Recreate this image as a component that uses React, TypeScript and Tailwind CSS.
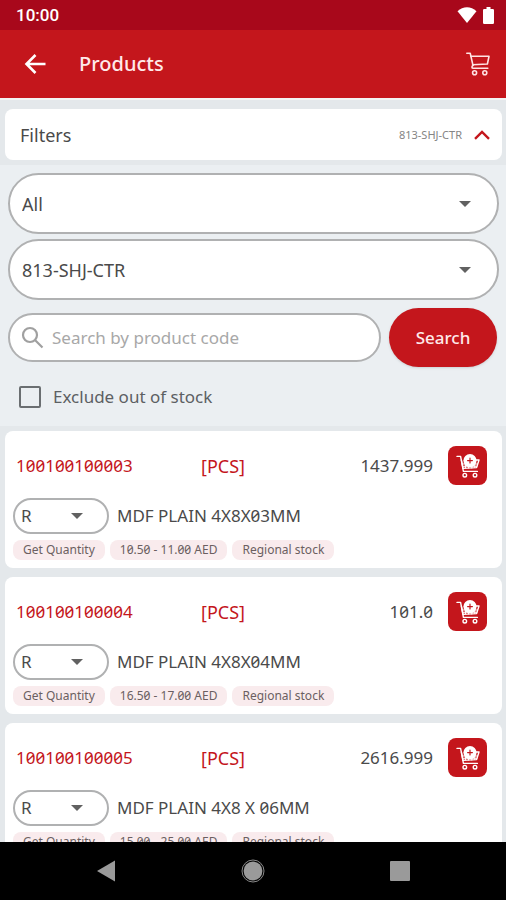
import { useState } from "react";

type Product = {
  code: string;
  unit: string;
  stock: string;
  name: string;
  price: string;
};

const products: Product[] = [
  { code: "100100100003", unit: "[PCS]", stock: "1437.999", name: "MDF PLAIN 4X8X03MM", price: "10.50 - 11.00 AED" },
  { code: "100100100004", unit: "[PCS]", stock: "101.0", name: "MDF PLAIN 4X8X04MM", price: "16.50 - 17.00 AED" },
  { code: "100100100005", unit: "[PCS]", stock: "2616.999", name: "MDF PLAIN 4X8 X 06MM", price: "15.00 - 25.00 AED" },
];

function CartIcon() {
  return (
    <svg className="h-6 w-6" viewBox="0 0 24 24" fill="none" stroke="#ffe3e3" strokeWidth="1.6" strokeLinejoin="round" strokeLinecap="round">
      <path d="M0.8 1.2H4.2L7 13.4" />
      <path d="M4.9 4.3H23L21.4 12L6.6 12.8" />
      <path d="M7 13.4C5.6 14.2 5.6 16.2 7.2 16.2H21.8" />
      <circle cx="8.6" cy="20.8" r="2" />
      <circle cx="18.8" cy="20.8" r="2" />
    </svg>
  );
}

function AddToCartIcon() {
  return (
    <svg className="h-6 w-6" viewBox="0 0 24 24" fill="none" stroke="#ffffff" strokeWidth="1.4" strokeLinejoin="round" strokeLinecap="round">
      <path d="M1 2.4H4.6L7.4 17.4H21.4" />
      <path d="M5.4 6.2L7 14.4L20.6 13.6L23 6H20" />
      <path d="M6.4 10H21.4M6.8 12.2H20.8M9.4 8V14M12.6 10V14M15.8 10V14M18.8 8V13.4" strokeWidth="1.1" />
      <circle cx="8.8" cy="21.2" r="1.8" />
      <circle cx="19" cy="21.2" r="1.8" />
      <circle cx="14" cy="6.6" r="6.6" fill="#ffffff" stroke="none" />
      <path d="M11.6 6.6H16.4M14 4.2V9" stroke="#c4161c" strokeWidth="1.2" />
    </svg>
  );
}

function Caret({ className }: { className: string }) {
  return (
    <svg className={`pointer-events-none absolute top-1/2 h-1.5 w-3 -translate-y-1/2 ${className}`} viewBox="0 0 12 6">
      <path d="M0 0H12L6 6Z" fill="#616161" />
    </svg>
  );
}

function FilterSelect({ label, options }: { label: string; options: string[] }) {
  return (
    <div className="relative">
      <select
        aria-label={label}
        className="block h-[61px] w-full appearance-none rounded-full border-2 border-[#b0b1b2] bg-white px-3 text-lg text-[#4a4a4a]"
      >
        {options.map((option) => (
          <option key={option}>{option}</option>
        ))}
      </select>
      <Caret className="right-7" />
    </div>
  );
}

function ProductCard({ product }: { product: Product }) {
  const chip = "h-5 rounded-lg bg-[#f9ebed] px-2.5 text-xs leading-5 text-[#6b5f61] whitespace-nowrap";
  return (
    <li className="rounded-lg bg-white pt-[15px] pr-[15px] pb-2 pl-2">
      <div className="flex h-[39px] items-center pl-[3px] text-[17px]">
        <span className="w-[185px] text-[#c4161c]">{product.code}</span>
        <span className="text-lg text-[#c4161c]">{product.unit}</span>
        <span className="ml-auto text-[#4a4a4a]">{product.stock}</span>
        <button
          type="button"
          aria-label={`Add ${product.code} to cart`}
          className="ml-[15px] flex size-[39px] items-center justify-center rounded-lg bg-[#c4161c]"
        >
          <AddToCartIcon />
        </button>
      </div>
      <div className="mt-[13px] flex items-center gap-2">
        <div className="relative w-24">
          <select
            aria-label={`Grade of ${product.code}`}
            className="block h-9 w-full appearance-none rounded-full border-2 border-[#b0b1b2] bg-white px-1.5 text-[17px] text-[#4a4a4a]"
          >
            <option>R</option>
          </select>
          <Caret className="right-[26px]" />
        </div>
        <span className="text-[17px] text-[#4a4a4a]">{product.name}</span>
      </div>
      <div className="mt-1.5 flex gap-[5px]">
        <button type="button" className={chip}>Get Quantity</button>
        <span className={chip}>{product.price}</span>
        <button type="button" className={chip}>Regional stock</button>
      </div>
    </li>
  );
}

export default function App() {
  const [open, setOpen] = useState(true);
  return (
    <div className="flex h-screen flex-col bg-[#e4e8eb] font-['Noto_Sans',sans-serif] slashed-zero">
      <div className="flex h-[30px] shrink-0 items-center justify-between bg-[#a8081b] pr-3 pl-4 text-white">
        <span className="pt-0.5 font-['Roboto',sans-serif] text-[17px] font-medium normal-nums">10:00</span>
        <div className="flex items-center gap-1.5">
          <svg className="h-4 w-5" viewBox="0 0 20 16" fill="#ffffff">
            <path d="M0.5 4.2C6 -1 14 -1 19.5 4.2L10 16Z" />
          </svg>
          <svg className="h-[17px] w-[11px]" viewBox="0 0 11 17" fill="#ffffff">
            <path d="M3.5 0H7.5V2H9.8Q11 2 11 3.2V15.8Q11 17 9.8 17H1.2Q0 17 0 15.8V3.2Q0 2 1.2 2H3.5Z" />
          </svg>
        </div>
      </div>

      <header className="flex h-[68px] shrink-0 items-center bg-[#c4161c] pr-4 pl-6 text-[#ffe9e9]">
        <button type="button" aria-label="Back" className="flex size-6 items-center justify-center">
          <svg className="h-5 w-6" viewBox="0 0 24 20" fill="none" stroke="#ffffff" strokeWidth="2.6">
            <path d="M21.5 10H3M11.5 1L2.5 10L11.5 19" />
          </svg>
        </button>
        <h1 className="ml-[31px] text-xl font-medium">Products</h1>
        <button type="button" aria-label="Cart" className="ml-auto">
          <CartIcon />
        </button>
      </header>

      <main className="min-h-0 flex-1 overflow-y-auto border-t-2 border-[#f3f4f4] [scrollbar-width:none]">
        <div className="pt-[9px] pr-1 pb-[5px] pl-[5px]">
          <button
            type="button"
            onClick={() => setOpen(!open)}
            className="flex h-[51px] w-full items-center rounded-lg bg-white pr-3 pl-[15px] text-lg text-[#4a4a4a]"
          >
            Filters
            <span className="ml-auto text-[11px] text-[#858585]">813-SHJ-CTR</span>
            <svg className="ml-3 h-2.5 w-4" viewBox="0 0 16 10" fill="none" stroke="#c4161c" strokeWidth="2.4">
              <path d="M1 8.8L8 2L15 8.8" />
            </svg>
          </button>
        </div>

        {open && (
          <section className="flex flex-col gap-[5px] bg-[#ebeff2] pt-2 pr-[7px] pb-3 pl-2">
            <FilterSelect label="Category" options={["All"]} />
            <FilterSelect label="Branch" options={["813-SHJ-CTR"]} />
            <form className="mt-[3px] flex items-center gap-2 pr-0.5" onSubmit={(e) => e.preventDefault()}>
              <label className="flex h-[49px] min-w-0 flex-1 items-center gap-2 rounded-full border-2 border-[#b0b1b2] bg-white px-2.5">
                <svg className="h-6 w-6 shrink-0" viewBox="0 0 24 24" fill="none" stroke="#a0a0a0" strokeWidth="2.2">
                  <circle cx="10" cy="9" r="7" />
                  <path d="M15 14L22.5 21.5" />
                </svg>
                <input
                  type="text"
                  aria-label="Search by product code"
                  placeholder="Search by product code"
                  className="min-w-0 flex-1 text-[17px] text-[#4a4a4a] outline-none placeholder:text-[#a8a8a8]"
                />
              </label>
              <button type="submit" className="h-[59px] w-[108px] rounded-full bg-[#c4161c] text-[17px] font-medium text-[#ffe9e9] shadow-sm">
                Search
              </button>
            </form>
            <label className="mt-2 flex h-[34px] items-center gap-3 pl-[11px] text-[17px] text-[#5c6063]">
              <input type="checkbox" className="size-[22px] appearance-none rounded-xs border-2 border-[#6a6e71] checked:bg-[#c4161c]" />
              Exclude out of stock
            </label>
          </section>
        )}

        <ul className="flex flex-col gap-[9px] pt-[5px] pr-1 pb-[5px] pl-[5px]">
          {products.map((product) => (
            <ProductCard key={product.code} product={product} />
          ))}
        </ul>
      </main>

      <nav className="flex h-[58px] shrink-0 items-center justify-around bg-black px-8">
        <button type="button" aria-label="Back">
          <svg className="h-6 w-6" viewBox="0 0 24 24" fill="#9a9a9a">
            <path d="M3 12L21 1.5V22.5Z" />
          </svg>
        </button>
        <button type="button" aria-label="Home">
          <svg className="h-6 w-6" viewBox="0 0 24 24" fill="#9a9a9a">
            <circle cx="12" cy="12" r="9.4" />
            <circle cx="12" cy="12" r="11" fill="none" stroke="#8a8a8a" strokeWidth="1" />
          </svg>
        </button>
        <button type="button" aria-label="Recent apps">
          <svg className="h-6 w-6" viewBox="0 0 24 24" fill="#9a9a9a">
            <rect x="2" y="2" width="20" height="20" rx="1" />
          </svg>
        </button>
      </nav>
    </div>
  );
}
